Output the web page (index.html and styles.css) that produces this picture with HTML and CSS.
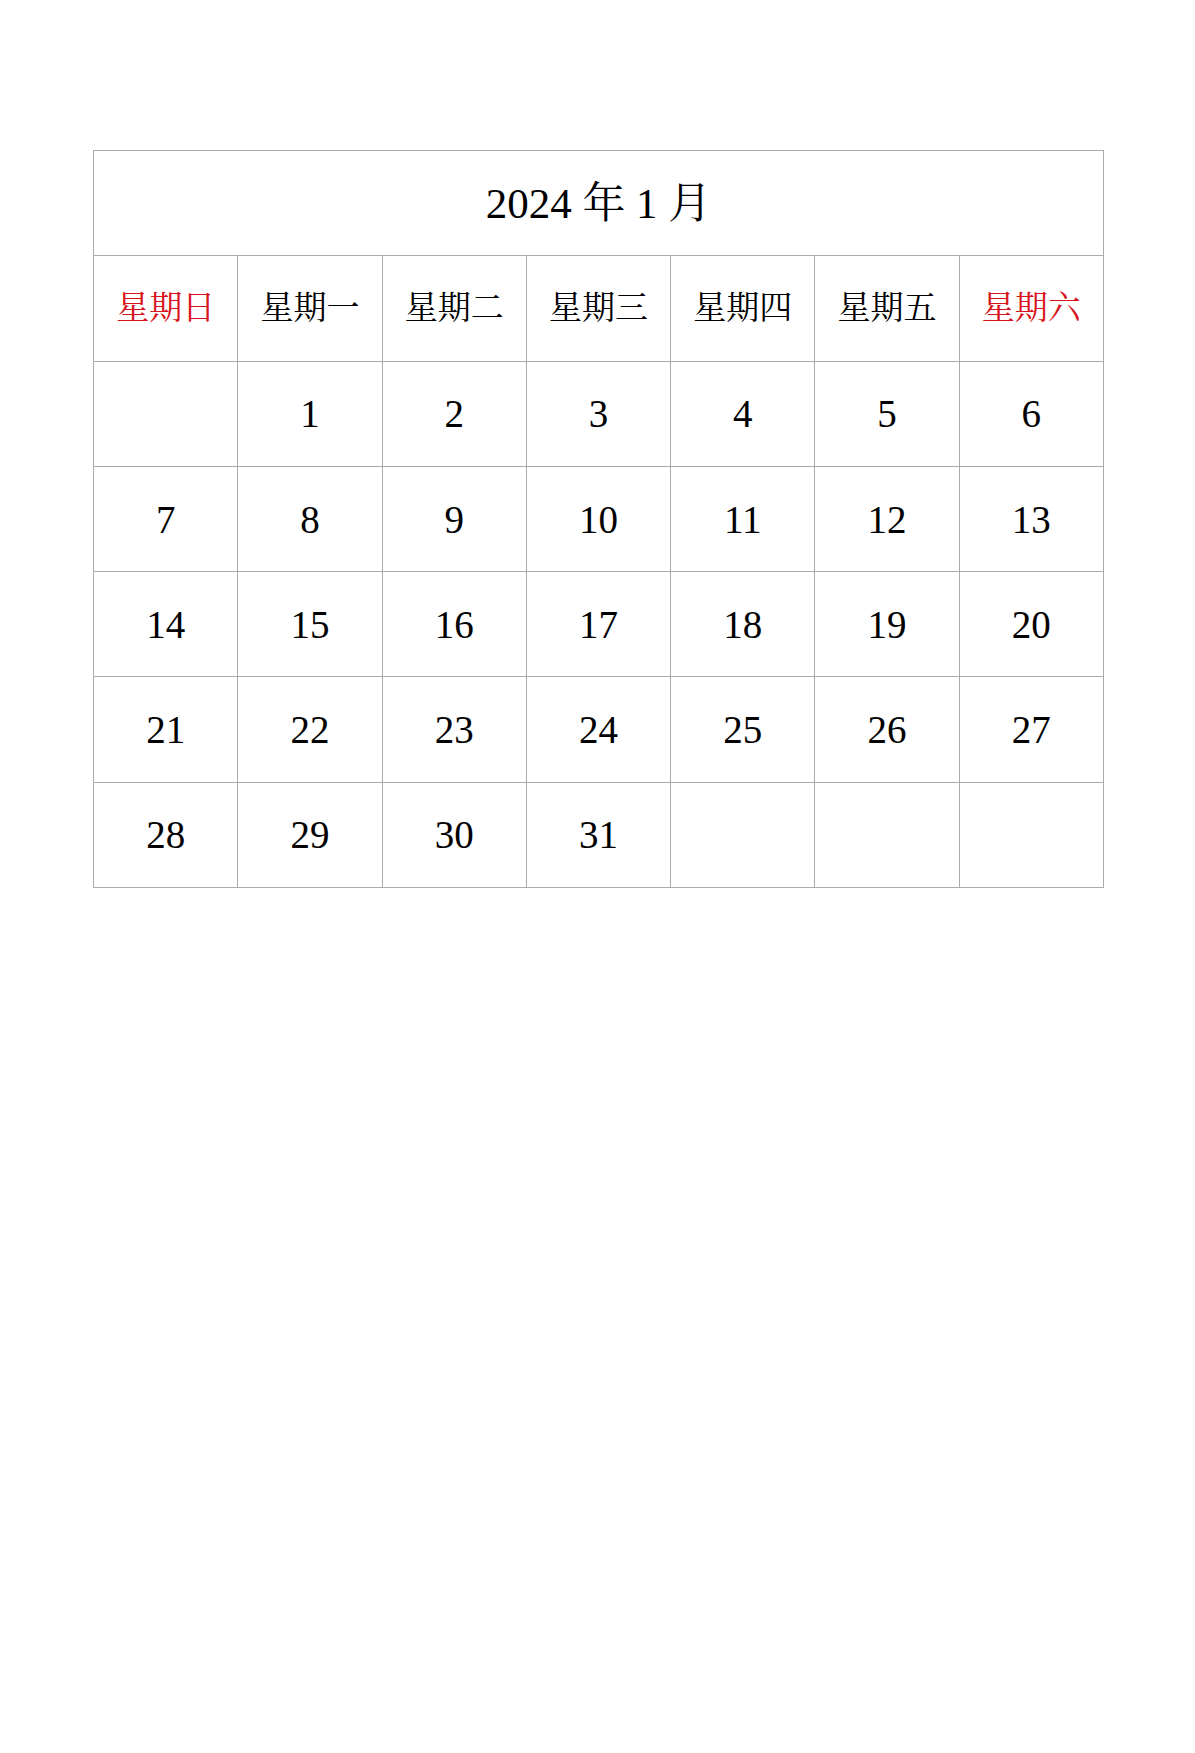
FILE: index.html
```html
<!DOCTYPE html>
<html lang="zh-CN">
<head>
<meta charset="utf-8">
<title>2024年1月</title>
<link rel="stylesheet" href="styles.css">
</head>
<body>
<div class="page">
  <div class="calendar">
    <div class="cell title">2024 年 1 月</div>
    <div class="cell head red">星期日</div>
    <div class="cell head">星期一</div>
    <div class="cell head">星期二</div>
    <div class="cell head">星期三</div>
    <div class="cell head">星期四</div>
    <div class="cell head">星期五</div>
    <div class="cell head red">星期六</div>
    <div class="cell day"></div>
    <div class="cell day">1</div>
    <div class="cell day">2</div>
    <div class="cell day">3</div>
    <div class="cell day">4</div>
    <div class="cell day">5</div>
    <div class="cell day">6</div>
    <div class="cell day">7</div>
    <div class="cell day">8</div>
    <div class="cell day">9</div>
    <div class="cell day">10</div>
    <div class="cell day">11</div>
    <div class="cell day">12</div>
    <div class="cell day">13</div>
    <div class="cell day">14</div>
    <div class="cell day">15</div>
    <div class="cell day">16</div>
    <div class="cell day">17</div>
    <div class="cell day">18</div>
    <div class="cell day">19</div>
    <div class="cell day">20</div>
    <div class="cell day">21</div>
    <div class="cell day">22</div>
    <div class="cell day">23</div>
    <div class="cell day">24</div>
    <div class="cell day">25</div>
    <div class="cell day">26</div>
    <div class="cell day">27</div>
    <div class="cell day">28</div>
    <div class="cell day">29</div>
    <div class="cell day">30</div>
    <div class="cell day">31</div>
    <div class="cell day"></div>
    <div class="cell day"></div>
    <div class="cell day"></div>
  </div>
</div>
</body>
</html>
```

FILE: styles.css
```css
html, body {
  margin: 0;
  padding: 0;
  background: #ffffff;
}

.page {
  padding: 150px 0 0 93px;
  font-family: "Liberation Serif", "Noto Serif CJK SC", "Noto Sans CJK SC", serif;
  color: #000000;
}

.calendar {
  width: 1011px;
  display: grid;
  grid-template-columns: repeat(7, 1fr);
  border-top: 1px solid #ababab;
  border-left: 1px solid #ababab;
  box-sizing: border-box;
}

.cell {
  height: 105.3px;
  box-sizing: border-box;
  border-right: 1px solid #ababab;
  border-bottom: 1px solid #ababab;
  display: flex;
  align-items: center;
  justify-content: center;
  line-height: 1;
}

.title {
  grid-column: 1 / -1;
  font-size: 43px;
}

.head {
  font-size: 33px;
}

.red {
  color: #d8121b;
}

.day {
  font-size: 39px;
}
```
